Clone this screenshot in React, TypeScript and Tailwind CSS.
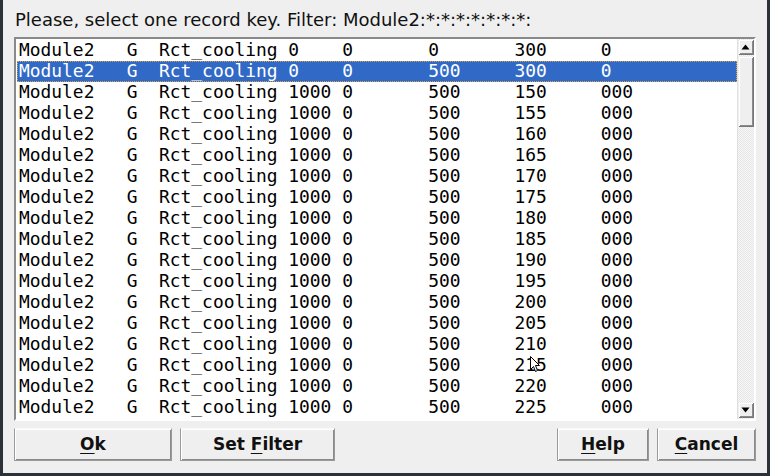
import React from "react";

const pad = (s: string, n: number) => s.padEnd(n, " ");

type Row = [string, string, string, string, string];

const data: Row[] = [
  ["0", "0", "0", "300", "0"],
  ["0", "0", "500", "300", "0"],
];
for (let v = 150; v <= 225; v += 5) data.push(["1000", "0", "500", String(v), "000"]);

const lineOf = (r: Row) =>
  pad("Module2", 10) + pad("G", 3) + pad("Rct_cooling", 12) + pad(r[0], 5) + pad(r[1], 8) + pad(r[2], 8) + pad(r[3], 8) + r[4];

function Btn({ w, children }: { w: string; children: React.ReactNode }) {
  return (
    <div
      className={`${w} h-[33px] flex items-center justify-center border border-[#9a9a9a] border-t-[#f8f8f8] border-l-[#9a9a9a] shadow-[inset_1px_1px_0_#ffffff,inset_-1px_-1px_0_#8a8a8a] bg-[#efefef] font-['DejaVu_Sans',sans-serif] font-bold text-[17px] text-[#111] leading-none`}
    >
      {children}
    </div>
  );
}

function ArrowBtn({ up }: { up: boolean }) {
  return (
    <div className="h-[15px] w-[15px] bg-[#efefef] flex items-center justify-center shadow-[inset_1px_1px_0_#ffffff,inset_-1px_-1px_0_#8a8a8a] border-r border-b border-[#777]">
      <svg width="9" height="6" viewBox="0 0 9 6">
        {up ? <polygon points="4.5,0.5 8.5,5.5 0.5,5.5" fill="#000" /> : <polygon points="0.5,0.5 8.5,0.5 4.5,5.5" fill="#000" />}
      </svg>
    </div>
  );
}

export default function App() {
  return (
    <div className="relative w-[770px] h-[476px] bg-[#2c3038] flex px-[3px] pb-[3px]">
      <div className="flex-1 bg-[#efefef] flex flex-col px-[11px]">
        <div className="h-[37px] pt-[9px] pl-[1px] font-['DejaVu_Sans',sans-serif] text-[18px] leading-[21px] text-[#111] whitespace-pre">
          Please, select one record key. Filter: Module2:*:*:*:*:*:*:*:
        </div>
        <div className="h-[384px] flex border-2 border-t-[#8a8a8a] border-l-[#8a8a8a] border-b-white border-r-white bg-white">
          <div className="flex-1 pt-[1px] pl-[1px] overflow-hidden font-['DejaVu_Sans_Mono',monospace] text-[17.9px]">
            {data.map((r, i) => (
              <div
                key={i}
                className={
                  i === 1
                    ? "h-[21px] pl-[1px] bg-[#3169c6] text-white whitespace-pre border border-dotted border-[#d9a441] leading-[17px]"
                    : "h-[21px] pl-[2px] text-black whitespace-pre leading-[19px]"
                }
              >
                {lineOf(r)}
              </div>
            ))}
          </div>
          <div className="w-[17px] flex flex-col items-center py-[1px] bg-[repeating-conic-gradient(#e6e6e6_0_25%,#f7f7f7_0_50%)] bg-[length:2px_2px] border-l border-[#e0e0e0]">
            <ArrowBtn up />
            <div className="mt-[2px] h-[70px] w-[15px] bg-[#efefef] shadow-[inset_1px_1px_0_#ffffff,inset_-1px_-1px_0_#8a8a8a] border-r border-b border-[#777]" />
            <div className="flex-1" />
            <ArrowBtn up={false} />
          </div>
        </div>
        <div className="mt-[7px] flex">
          <Btn w="w-[158px]">
            <span><span className="underline underline-offset-[3px]">O</span>k</span>
          </Btn>
          <div className="ml-[8px]">
            <Btn w="w-[155px]">
              <span>Set <span className="underline underline-offset-[3px]">F</span>ilter</span>
            </Btn>
          </div>
          <div className="flex-1" />
          <Btn w="w-[92px]">
            <span><span className="underline underline-offset-[3px]">H</span>elp</span>
          </Btn>
          <div className="ml-[8px]">
            <Btn w="w-[99px]">
              <span><span className="underline underline-offset-[3px]">C</span>ancel</span>
            </Btn>
          </div>
        </div>
      </div>
      <svg className="absolute left-[530px] top-[356px]" width="11" height="17" viewBox="0 0 11 17">
        <path d="M0.5 0.5 L0.5 13.5 L3.5 10.5 L5.5 15.5 L7.5 14.5 L5.5 9.5 L9.5 9.5 Z" fill="#fff" stroke="#000" strokeWidth="1" strokeLinejoin="miter" />
      </svg>
    </div>
  );
}
